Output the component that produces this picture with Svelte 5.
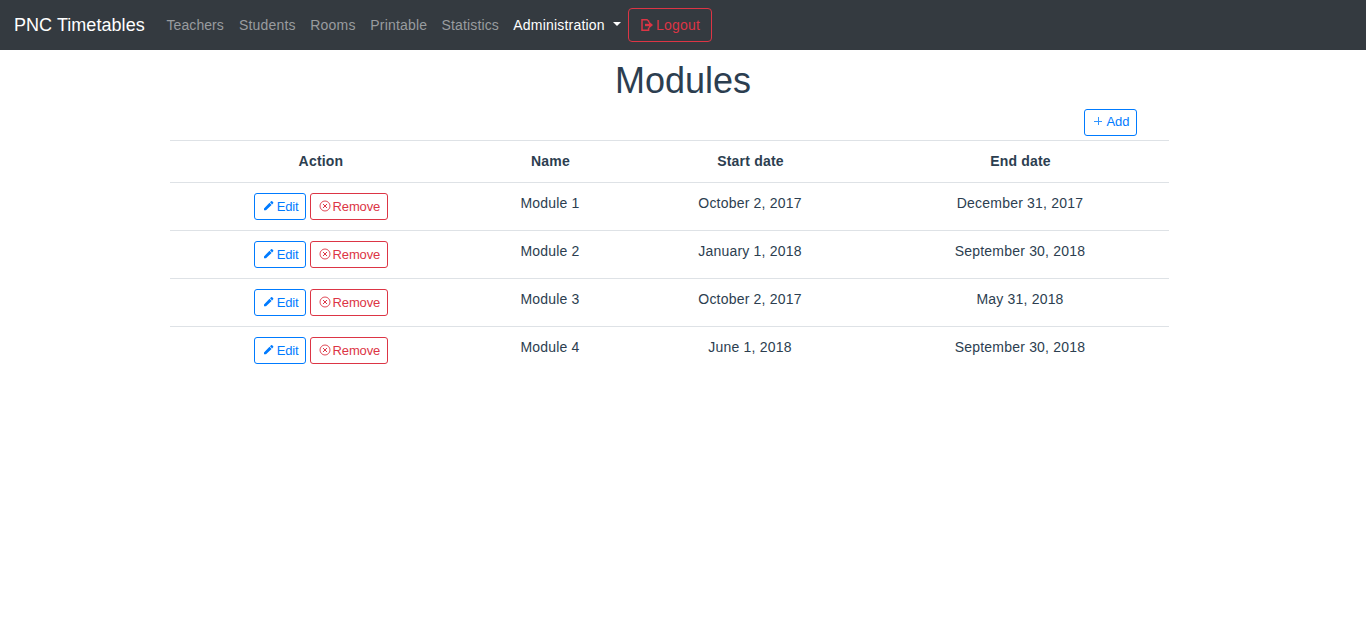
<script>
  const links = [
    { label: 'Teachers', width: 72.5, spacing: 0.08 },
    { label: 'Students', width: 71.3, spacing: 0.18 },
    { label: 'Rooms', width: 60, spacing: 0.2 },
    { label: 'Printable', width: 71.2, spacing: 0.18 },
    { label: 'Statistics', width: 71.8, spacing: 0.15 },
  ];
  const modules = [
    { name: 'Module 1', start: 'October 2, 2017', end: 'December 31, 2017' },
    { name: 'Module 2', start: 'January 1, 2018', end: 'September 30, 2018' },
    { name: 'Module 3', start: 'October 2, 2017', end: 'May 31, 2018' },
    { name: 'Module 4', start: 'June 1, 2018', end: 'September 30, 2018' },
  ];
</script>

<nav>
  <a class="brand" href="#home">PNC Timetables</a>
  {#each links as link}
    <a class="link" href="#{link.label}" style="width: {link.width}px; letter-spacing: {link.spacing}px">{link.label}</a>
  {/each}
  <a class="link active" href="#admin">Administration<span class="caret"></span></a>
  <button class="logout">
    <svg width="13" height="14" viewBox="0 0 13 14" fill="none" stroke="currentColor" stroke-width="1.5">
      <path d="M8.6 4.5V3L7 1.7H2V12.2H8.6V9.5" />
      <path d="M5 7H10" stroke-width="2.4" />
      <path d="M9 3.6L13 7L9 10.4Z" fill="currentColor" stroke="none" />
    </svg><span>Logout</span>
  </button>
</nav>

<main>
  <h1>Modules</h1>
  <div class="toolbar">
    <button class="btn blue add">
      <svg width="10" height="10" viewBox="0 0 10 10" stroke="currentColor" stroke-width="1" opacity=".8"><path d="M1 5.5H9M5.5 1V9" /></svg><span>Add</span>
    </button>
  </div>
  <table>
    <colgroup><col class="c1" /><col class="c2" /><col class="c3" /><col class="c4" /></colgroup>
    <thead>
      <tr><th>Action</th><th>Name</th><th>Start date</th><th>End date</th></tr>
    </thead>
    <tbody>
      {#each modules as m}
        <tr>
          <td>
            <div class="actions">
              <button class="btn blue edit">
                <svg width="11" height="12" viewBox="0 0 11 12" fill="currentColor"><path d="M1 8.4L6.5 2.8L8.6 4.9L3 10.3H1ZM7 2.3L8.1 1.3Q8.7.9 9.2 1.3L10.2 2.3Q10.6 2.8 10.2 3.3L9.1 4.4Z" /></svg><span>Edit</span>
              </button>
              <button class="btn red remove">
                <svg width="12" height="12" viewBox="0 0 12 12" fill="none" stroke="currentColor"><circle cx="6" cy="6" r="5" stroke-width=".9" /><path d="M4 4L8 8M8 4L4 8" stroke-width="1" /></svg><span>Remove</span>
              </button>
            </div>
          </td>
          <td>{m.name}</td>
          <td>{m.start}</td>
          <td>{m.end}</td>
        </tr>
      {/each}
    </tbody>
  </table>
</main>

<style>
  :global(body) {
    background: #fff;
    font: 14px/21px "Liberation Sans", Arial, sans-serif;
    color: #2c3e50;
  }
  nav {
    display: flex;
    align-items: center;
    height: 50px;
    padding-left: 14px;
    box-sizing: border-box;
    background: #343a40;
    white-space: nowrap;
  }
  nav a { text-decoration: none; }
  .brand { width: 152.5px; font-size: 18px; letter-spacing: .05px; color: #fff; }
  .link { color: #999c9f; }
  .active { width: 114.7px; color: #fff; letter-spacing: .2px; }
  .caret {
    display: inline-block;
    margin-left: 8px;
    vertical-align: 3.5px;
    border: 4px solid transparent;
    border-top-color: #fff;
    border-bottom: 0;
  }
  button {
    display: flex;
    align-items: center;
    box-sizing: border-box;
    margin: 0;
    font-family: inherit;
    border: 1px solid currentColor;
    background: transparent;
    white-space: nowrap;
  }
  svg { display: block; flex: none; }
  .logout {
    width: 84px;
    height: 34px;
    padding: 0 0 0 11px;
    gap: 3px;
    border-radius: 4px;
    font-size: 14px;
    letter-spacing: .2px;
    color: #dc3545;
  }
  main { width: 999px; margin-left: 170px; }
  h1 {
    margin: 0;
    padding: 10px 0 7px;
    width: 1026px;
    font-size: 36px;
    line-height: 42px;
    font-weight: 400;
    text-align: center;
  }
  .toolbar { display: flex; justify-content: flex-end; height: 31px; padding-right: 32px; }
  .btn {
    height: 27px;
    padding: 0 0 1px 8px;
    border-radius: 3px;
    font-size: 13px;
    letter-spacing: -.12px;
    line-height: 18px;
  }
  .btn span { padding-top: 2px; }
  .blue { color: #007bff; }
  .red { color: #dc3545; }
  .add { width: 53px; gap: 3.5px; padding-bottom: 3px; }
  .edit { width: 52px; gap: 3.2px; }
  .remove { width: 78px; gap: 2px; }
  .actions { display: flex; gap: 4px; justify-content: center; }
  table { width: 999px; table-layout: fixed; border-collapse: separate; border-spacing: 0; text-align: center; }
  .c1 { width: 301px; }
  .c2 { width: 158px; }
  .c3 { width: 242px; }
  .c4 { width: 298px; }
  th, td {
    box-sizing: border-box;
    height: 48px;
    padding: 10px 0 0;
    vertical-align: top;
    border-top: 1px solid #dee2e6;
    letter-spacing: .2px;
  }
  th { height: 42px; padding-left: 1px; }
  td:first-child { letter-spacing: 0; }
</style>
